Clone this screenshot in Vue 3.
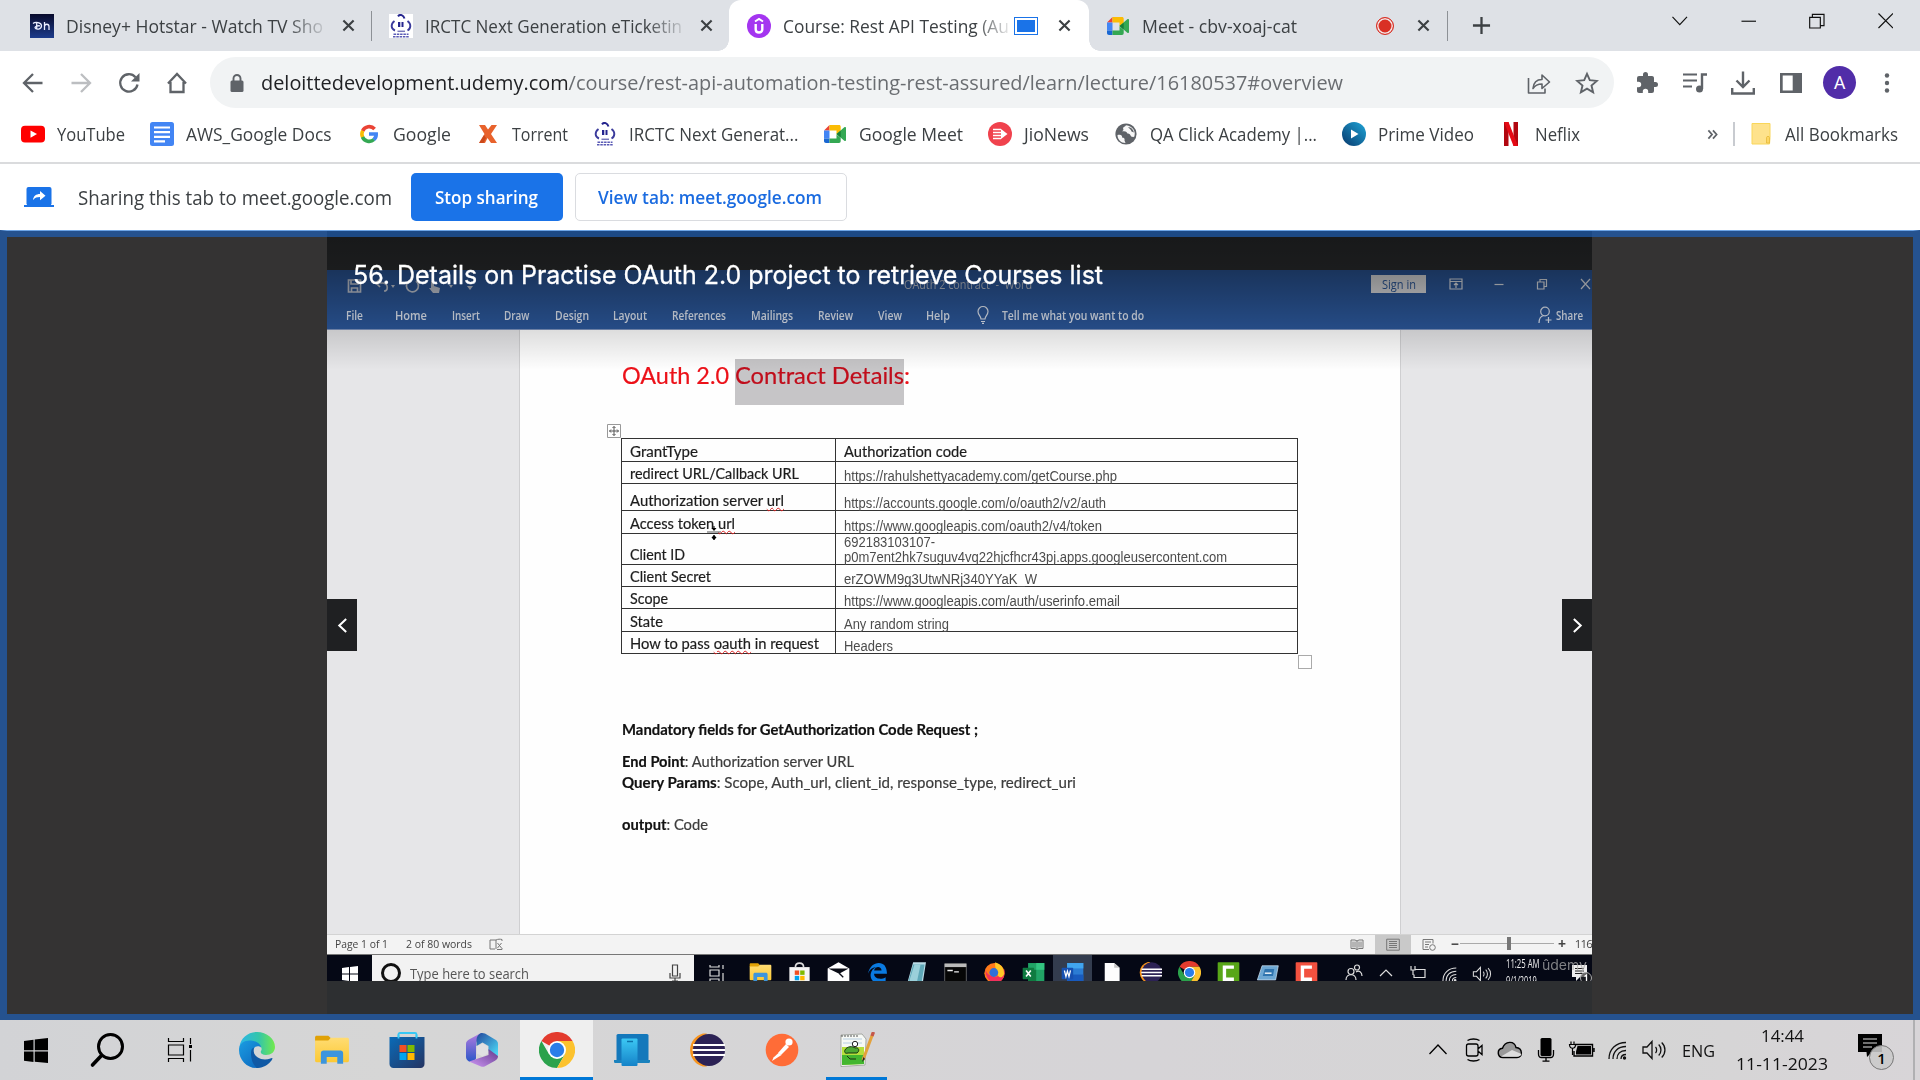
<script setup>
/* Fits a single-line label to a given advance width, whatever UI font is available. */
const vFit = {
  mounted(el, { value }) {
    const width = el.getBoundingClientRect().width
    if (!width || !value) return
    el.style.transform = `scaleX(${value / width})`
    el.style.marginRight = `${value - width}px`
  },
}

const bookmarks = [
  { icon: 'youtube', label: 'YouTube', w: 68 },
  { icon: 'docs', label: 'AWS_Google Docs', w: 145.5 },
  { icon: 'google', label: 'Google', w: 58 },
  { icon: 'torrent', label: 'Torrent', w: 56 },
  { icon: 'irctc', label: 'IRCTC Next Generat...', w: 169.5 },
  { icon: 'meet', label: 'Google Meet', w: 104 },
  { icon: 'jio', label: 'JioNews', w: 65 },
  { icon: 'globe', label: 'QA Click Academy |...', w: 167 },
  { icon: 'prime', label: 'Prime Video', w: 96 },
  { icon: 'netflix', label: 'Neflix', w: 45 },
]
const actions = ['puzzle', 'queue', 'download', 'panel']
const menu = [
  ['Home', 32], ['Insert', 28], ['Draw', 25.5], ['Design', 34], ['Layout', 34], ['References', 54],
  ['Mailings', 42], ['Review', 35], ['View', 24], ['Help', 24],
]
const rows = [
  { h: 22.5, left: ['GrantType'], lw: 68, right: ['Authorization code'], rw: [123], lato: true },
  { h: 22.5, left: ['redirect URL/Callback URL'], lw: 169, right: ['https://rahulshettyacademy.com/getCourse.php'], rw: [273] },
  { h: 27, left: ['Authorization server ', 'url'], lw: 154, right: ['https://accounts.google.com/o/oauth2/v2/auth'], rw: [262] },
  { h: 23, left: ['Access token ', 'url'], lw: 105, right: ['https://www.googleapis.com/oauth2/v4/token'], rw: [258] },
  { h: 31, left: ['Client ID'], lw: 55, right: ['692183103107-', 'p0m7ent2hk7suguv4vq22hjcfhcr43pj.apps.googleusercontent.com'], rw: [91, 383] },
  { h: 22, left: ['Client Secret'], lw: 81, right: ['erZOWM9g3UtwNRj340YYaK_W'], rw: [193] },
  { h: 22, left: ['Scope'], lw: 38, right: ['https://www.googleapis.com/auth/userinfo.email'], rw: [276] },
  { h: 23, left: ['State'], lw: 33, right: ['Any random string'], rw: [105] },
  { h: 22, left: ['How to pass ', 'oauth', ' in request'], lw: 189, right: ['Headers'], rw: [49] },
]
const wordApps = ['folder', 'bag', 'mail', 'olde', 'notes', 'cmd', 'firefox', 'excel', 'word', 'file', 'eclipse', 'chrome', 'camg', 'card', 'camr']
const apps = [
  { icon: 'start' }, { icon: 'search' }, { icon: 'taskview' }, { icon: 'edge' }, { icon: 'folder' },
  { icon: 'store' }, { icon: 'm365' }, { icon: 'chrome', state: 'active' }, { icon: 'phone' },
  { icon: 'eclipse' }, { icon: 'postman' }, { icon: 'npp', state: 'open' },
]
const tray = ['up', 'cam', 'cloud', 'mic', 'battery', 'wifi', 'volume']
</script>

<template>
  <svg class="sprite" aria-hidden="true">
    <defs>
      <linearGradient id="gEdgeA" x1="0" x2="1"><stop offset="0" stop-color="#2bb5e8" /><stop offset=".55" stop-color="#35c6a8" /><stop offset="1" stop-color="#72ea4c" /></linearGradient>
      <linearGradient id="gEdgeB" x1="0" y1="0" x2="1" y2="1"><stop offset="0" stop-color="#1b9de2" /><stop offset="1" stop-color="#0a5fb8" /></linearGradient>
      <linearGradient id="gFolder" x1="0" y1="0" x2="0" y2="1"><stop offset="0" stop-color="#ffdc73" /><stop offset="1" stop-color="#fcc934" /></linearGradient>
      <linearGradient id="gStore" x1="0" y1="0" x2="1" y2="1"><stop offset="0" stop-color="#0a6bb8" /><stop offset="1" stop-color="#253462" /></linearGradient>
      <linearGradient id="gPrime" x1="1" y1="0" x2="0" y2="1"><stop offset="0" stop-color="#1fa6d8" /><stop offset="1" stop-color="#07386c" /></linearGradient>
      <linearGradient id="gHot" x1="0" y1="0" x2="0" y2="1"><stop offset="0" stop-color="#080a2b" /><stop offset="1" stop-color="#1d3c8c" /></linearGradient>
      <linearGradient id="gM1" x1="0" y1="0" x2="0" y2="1"><stop offset="0" stop-color="#b57ce0" /><stop offset="1" stop-color="#2a57c8" /></linearGradient>
      <linearGradient id="gM2" x1="0" y1="0" x2="1" y2="1"><stop offset="0" stop-color="#23479c" /><stop offset="1" stop-color="#4fe0fb" /></linearGradient>
      <linearGradient id="gM3" x1="0" y1="1" x2="1" y2="0"><stop offset="0" stop-color="#cf97f5" /><stop offset="1" stop-color="#623a8c" /></linearGradient>
      <linearGradient id="gPhone" x1="0" y1="0" x2="0" y2="1"><stop offset="0" stop-color="#3cc8f4" /><stop offset="1" stop-color="#1583c8" /></linearGradient>
    </defs>

    <symbol id="hotstar" viewBox="0 0 24 24"><rect width="24" height="24" fill="url(#gHot)" /><path d="M3 9.500c2-1.800 8.500-1.500 8.500 2.300s-5.500 4.200-6.500 2c0-1.800 2.500-2.200 5-2M6.700 8v7M14.500 8v8m0-3.500c0-3 4.500-3 4.500 0V16" fill="none" stroke="#e9edff" stroke-width="1.300" /></symbol>
    <symbol id="irctc" viewBox="0 0 24 24"><rect width="24" height="24" fill="#fff" /><path d="M9 2.300c2-2.600 5.500-1.200 6.500 2.200" fill="none" stroke="#25258e" stroke-width="2" /><path d="M5.500 7C1.500 10 1.800 15 6 16.500M18.500 7c4 3 3.500 7.500 0 9.500" fill="none" stroke="#3b3b9c" stroke-width="1.900" /><path d="M8.500 17.300h7.500" stroke="#7777bb" stroke-width="1.500" /><path d="M9 8h2.300v5H9zM12.500 8h2v5h-2z" fill="#25258e" /><path d="M4.500 20.300h15M4 22.800h16" stroke="#5a5ab5" stroke-width="1.500" stroke-dasharray="2.500 .8" /></symbol>
    <symbol id="udemy" viewBox="0 0 24 24"><circle cx="12" cy="12" r="12" fill="#a435f0" /><path d="M8 7.500 12 5l4 2.500" fill="none" stroke="#fff" stroke-width="2" /><path d="M8.700 10v5.500c0 4 6.600 4 6.600 0V10" fill="none" stroke="#fff" stroke-width="2.400" /></symbol>
    <symbol id="meet" viewBox="0 0 24 24"><path d="M1 8.500 6.500 3v5.500z" fill="#ea4335" /><path d="M1 8.500h5.500v8H1z" fill="#4285f4" /><path d="M1 16.500h5.500V21H3c-1.200 0-2-.8-2-2z" fill="#1967d2" /><path d="M6.500 3H16c1 0 1.700.7 1.700 1.700V9l-4.200 3.500v-4h-7z" fill="#fbbc04" /><path d="M6.500 16.500h7v-4l4.200 3.400V19c0 1.200-.7 2-1.700 2H6.500z" fill="#34a853" /><path d="m13.500 12 7.800-6.700c.7-.5 1.700-.2 1.700.7v12c0 .9-1 1.200-1.700.7z" fill="#34a853" /><path d="M17.700 8.700v7L13.500 12z" fill="#188038" /></symbol>
    <symbol id="close" viewBox="0 0 14 14"><path d="m1.500 1.500 11 11m0-11-11 11" stroke="#3c4043" stroke-width="2.300" fill="none" /></symbol>

    <symbol id="youtube" viewBox="0 0 24 24"><rect y="3.700" width="24" height="16.800" rx="4" fill="#f00" /><path d="m9.500 8.500 6.500 3.600-6.500 3.600z" fill="#fff" /></symbol>
    <symbol id="docs" viewBox="0 0 24 24"><rect width="24" height="24" rx="2.500" fill="#4285f4" /><path d="M4 5.500h16M4 10.200h16M4 14.800h16M4 19.300h11" stroke="#fff" stroke-width="2.200" /></symbol>
    <symbol id="google" viewBox="0 0 24 24"><g fill="none" stroke-width="3.600"><path d="M17.600 7A7.200 7.200 0 0 0 5.600 9" stroke="#ea4335" /><path d="M5.700 8.700a7.300 7.300 0 0 0 0 6.600" stroke="#fbbc04" /><path d="M5.500 15a7.200 7.200 0 0 0 11.500 2.500" stroke="#34a853" /><path d="M12 12h7.200a7.200 7.200 0 0 1-2.400 5.700" stroke="#4285f4" /></g></symbol>
    <symbol id="torrent" viewBox="0 0 24 24"><path d="M3 3h6l3 4.500L15.500 3H21l-6 9 6 9h-6l-3.500-5L9 21H3l5.500-9z" fill="#e8622c" /><path d="m3 21 5-8 2 3-2.500 5z" fill="#b9380f" opacity=".6" /></symbol>
    <symbol id="jio" viewBox="0 0 24 24"><circle cx="12" cy="12" r="12" fill="#f0424d" /><path d="M5 7.500h8M5 10.500h8M5 13.500h8M5 16.500h8" stroke="#fff" stroke-width="1.500" /><path d="m13 7 6.500 5-6.500 5z" fill="#fff" /></symbol>
    <symbol id="globe" viewBox="0 0 24 24"><circle cx="12" cy="12" r="10.600" fill="#5f6368" /><path d="M3.500 13c4-1 5 1 4.500 2.500 2 0 3 1 2.500 3l1 2.500C7 21 3.500 17.500 3.500 13zM12 3.300c-1 1.700-2.500 1-3 3 1 1.500 0 2.700-1 3 3 0 4.500 0 5 1.500s3 .5 3.500 2.500 3 1.500 3.500 2c2.500-5-1-11.500-8-12z" fill="#fff" opacity=".95" /><path d="M14 5c1 1.500 3 2 3.500 4.500l2.500 1C19 7 17 5.200 14 5z" fill="#5f6368" /></symbol>
    <symbol id="prime" viewBox="0 0 24 24"><circle cx="12" cy="12" r="12" fill="url(#gPrime)" /><path d="m9 7.500 7.500 4.500L9 16.500z" fill="#fff" /></symbol>
    <symbol id="netflix" viewBox="0 0 24 24"><path d="M5 0h4.500v24H5zM14.500 0H19v24h-4.500z" fill="#b1060f" /><path d="M5 0h4.500L19 24h-4.500z" fill="#e50914" /></symbol>
    <symbol id="mark" viewBox="0 0 24 24"><path d="M3 1.500h18v14l-.5 6.500H3z" fill="#fee28c" stroke="#f9d65a" /><path d="M17.500 21v-5.500c0-1.500 3-1.500 3 0V21z" fill="#fdd663" stroke="#e6b93a" stroke-width=".8" /></symbol>

    <symbol id="back" viewBox="0 0 24 24"><path d="M21.500 12H3.500M12 3l-9 9 9 9" fill="none" stroke="currentColor" stroke-width="2.300" /></symbol>
    <symbol id="reload" viewBox="0 0 24 24"><path d="M20.500 13.500A8.700 8.700 0 1 1 18.500 6.200" fill="none" stroke="#5f6368" stroke-width="2.300" /><path d="M22.500 2v8.500H14z" fill="#5f6368" /></symbol>
    <symbol id="home" viewBox="0 0 24 24"><path d="M3 12.500 12 3l9 9.500M5.500 11v10h13V11" fill="none" stroke="#5f6368" stroke-width="2.300" /></symbol>
    <symbol id="lock" viewBox="0 0 24 24"><rect x="5.500" y="9.500" width="13" height="11.500" rx="1.500" fill="#5f6368" /><path d="M8.500 10V7.500a3.500 3.500 0 0 1 7 0V10" fill="none" stroke="#5f6368" stroke-width="1.900" /></symbol>
    <symbol id="share" viewBox="0 0 24 24"><path d="M1.500 7v15h16.500v-4.500M6 17.500c.5-6 4-9 9-9V4l7.500 7-7.500 6.500v-4.500c-4 0-7 1.500-9 4.500z" fill="none" stroke="#5f6368" stroke-width="1.600" stroke-linejoin="round" /></symbol>
    <symbol id="star" viewBox="0 0 24 24"><path d="m12 2.800 2.800 6.400 7 .7-5.300 4.600 1.600 6.800-6.100-3.600-6.100 3.600 1.600-6.800-5.300-4.600 7-.7z" fill="none" stroke="#5f6368" stroke-width="1.900" /></symbol>
    <symbol id="puzzle" viewBox="0 0 24 24"><path d="M20.500 11H19V7c0-1.100-.9-2-2-2h-4V3.500a2.500 2.500 0 0 0-5 0V5H4a2 2 0 0 0-2 2v3.800h1.500a2.700 2.700 0 0 1 0 5.400H2V20c0 1.100.9 2 2 2h3.800v-1.500a2.700 2.700 0 0 1 5.400 0V22H17a2 2 0 0 0 2-2v-4h1.500a2.500 2.500 0 0 0 0-5z" fill="#5f6368" /></symbol>
    <symbol id="queue" viewBox="0 0 24 24"><path d="M0 3.500h14M0 9.500h14M0 15.500h9" stroke="#5f6368" stroke-width="2.200" /><path d="M24 3.500h-5V18" fill="none" stroke="#5f6368" stroke-width="2.400" /><circle cx="16.500" cy="18" r="3.500" fill="#5f6368" /></symbol>
    <symbol id="download" viewBox="0 0 24 24"><path d="M12 .5v15M5.500 9.500l6.500 6.500 6.500-6.500M1.200 17v5.500h21.600V17" fill="none" stroke="#5f6368" stroke-width="2.400" /></symbol>
    <symbol id="panel" viewBox="0 0 24 24"><path d="M1 2h22v20H1zm2.700 2.600v14.800h10V4.600z" fill="#5f6368" fill-rule="evenodd" /></symbol>
    <symbol id="cast" viewBox="0 0 30 20"><rect x="2.500" width="25" height="18.500" rx="2" fill="#1a73e8" /><path d="M0 19h30" stroke="#1a73e8" stroke-width="2" /><path d="M9 13c.5-4 3-6 7-6V4l5.500 4.700L16 13.200v-3.100c-3 0-5 .6-7 2.900z" fill="#fff" /></symbol>

    <symbol id="folder" viewBox="0 0 34 34"><path d="M1 5c0-1 .7-1.500 1.500-1.500h11L16 6l-2 3H1z" fill="#e0a106" /><path d="M1 8h12.500L16 5.500h15.500c1 0 1.500.5 1.500 1.500v20c0 1-.5 1.500-1.500 1.500h-29C1.500 28.500 1 28 1 27z" fill="url(#gFolder)" /><path d="M6.500 30V20c0-1.500 1-2.500 2.500-2.500h16c1.500 0 2.500 1 2.500 2.500v10H22v-6.500H12V30z" fill="#3d95dc" /></symbol>
    <symbol id="chrome" viewBox="0 0 36 36"><path d="M18 18 2.400 9A18 18 0 0 1 33.600 9H18z" fill="#e33b2e" /><path d="M2.400 9A18 18 0 0 0 18 36l7.800-13.500L18 18l-7.800 4.500z" fill="#2ba24c" /><path d="M33.600 9A18 18 0 0 1 18 36l7.800-13.500L18 9z" fill="#fcc22e" /><circle cx="18" cy="18" r="9" fill="#fff" /><circle cx="18" cy="18" r="7.200" fill="#2a7de9" /></symbol>
    <symbol id="eclipse" viewBox="0 0 36 36"><path d="M14 1.500A17 17 0 0 0 14 34.500l4 0A20 20 0 0 1 18 1.500z" fill="#f7941e" /><circle cx="20" cy="18" r="16" fill="#2c2255" /><path d="M4 13h32M3.500 18h33M4 23h32" stroke="#fff" stroke-width="2.200" /></symbol>

    <symbol id="bag" viewBox="0 0 34 34"><path d="M2 9h30v25H2z" fill="#f5f5f5" /><path d="M11 9c0-8 12-8 12 0" fill="none" stroke="#ddd" stroke-width="2.500" /><path d="M10 14h6.500v6.500H10z" fill="#f25022" /><path d="M18 14h6.500v6.500H18z" fill="#7fba00" /><path d="M10 22h6.500v6.500H10z" fill="#00a4ef" /><path d="M18 22h6.500v6.500H18z" fill="#ffb900" /></symbol>
    <symbol id="mail" viewBox="0 0 34 34"><path d="M1 11 17 2l16 9v23H1z" fill="#fff" /><path d="M2 11h30l-14 8z" fill="#0a0c16" /><path d="m18 18 6 6" stroke="#0a0c16" stroke-width="2" /></symbol>
    <symbol id="olde" viewBox="0 0 34 34"><path d="M3 19C5 8 12 3 19 3s12 5 12 16H12c0 8 11 9 17 5v6c-12 7-24 0-22-11 1-5 4-8 8-10-6 1-10 4-12 10zm9-5h11c0-7-10-7-11 0z" fill="#0a7ae0" /></symbol>
    <symbol id="notes" viewBox="0 0 34 34"><path d="M12 2h19l-5 32H3z" fill="#b9dbe6" /><path d="M12 5h17l-5 29H4z" fill="#5fa8b8" /><path d="M14 5h9L17 34H5z" fill="#9bd0da" /></symbol>
    <symbol id="cmd" viewBox="0 0 34 34"><path d="M1 4h32v30H1z" fill="#060606" stroke="#8a8a8a" /><path d="M1 4h32v5H1z" fill="#bbb" /><path d="M5 14h8m2 2h7" stroke="#eee" stroke-width="2" /></symbol>
    <symbol id="firefox" viewBox="0 0 34 34"><circle cx="17" cy="18" r="15" fill="#ff7a1a" /><path d="M4 11C2 27 14 34 22 32S34 18 31 11c-1 4-6 14-15 12S4 17 4 11z" fill="#f2305c" /><path d="M18 2c9 3 14 10 13 18-3 6-9 5-9 0s-5-6-4-18z" fill="#ffc926" /><circle cx="16" cy="17" r="6.500" fill="#2f70d9" /></symbol>
    <symbol id="excel" viewBox="0 0 34 34"><path d="M9 3h24v31H9z" fill="#21a366" /><path d="M21 3h12v10H21z" fill="#33c481" /><path d="M9 13h12v21H9z" fill="#107c41" /><rect x="1" y="10" width="17" height="17" rx="1" fill="#0f7a40" /><path d="m6 14 7 9m0-9-7 9" stroke="#fff" stroke-width="2.400" /></symbol>
    <symbol id="word" viewBox="0 0 34 34"><path d="M9 3h24v31H9z" fill="#2b7cd3" /><path d="M9 3h24v8H9z" fill="#41a5ee" /><path d="M9 20h24v14H9z" fill="#185abd" /><rect x="1" y="10" width="17" height="17" rx="1" fill="#1650b0" /><path d="m5 14 2.300 9L9.500 15l2.300 8L14 14" fill="none" stroke="#fff" stroke-width="1.900" /></symbol>
    <symbol id="file" viewBox="0 0 34 34"><path d="M7 3h14l8 7v24H7z" fill="#fdfdfd" /><path d="M21 3v7h8z" fill="#c7c7c7" /></symbol>
    <symbol id="camg" viewBox="0 0 34 34"><rect x="1" y="2" width="32" height="32" rx="1" fill="#58a618" /><path d="M25 9H11v18h14" fill="none" stroke="#fff" stroke-width="5" /></symbol>
    <symbol id="camr" viewBox="0 0 34 34"><rect x="1" y="2" width="32" height="32" rx="1" fill="#f2513f" /><path d="M25 9H11v18h14" fill="none" stroke="#fff" stroke-width="5" /></symbol>
    <symbol id="card" viewBox="0 0 34 34"><path d="M9 7h24l-4 21H2z" fill="#6da7d3" stroke="#d6e8f5" /><path d="M13 12h14l-2 10H10z" fill="#2f74ae" /><path d="M13 18h10" stroke="#fff" stroke-width="2" /></symbol>

    <symbol id="start" viewBox="0 0 36 36"><path d="m10 9 9.500-1.300v10.500H10zM20.700 7.500 34 6v12.200H20.700zM10 19.500h9.500V30L10 28.700zM20.700 19.500H34V31l-13.300-1.300z" fill="#000" /></symbol>
    <symbol id="search" viewBox="0 0 36 36"><circle cx="21.500" cy="14.500" r="12" fill="none" stroke="#000" stroke-width="3" /><path d="M12.500 23.500 3.500 33" stroke="#000" stroke-width="3.600" stroke-linecap="round" /></symbol>
    <symbol id="taskview" viewBox="0 0 36 36"><path d="M4.500 6v3.500h15V6M4.500 13h15v10h-15zM4.500 30v-3.500h15V30M26.500 6v6M26.500 18v11.500" fill="none" stroke="#000" stroke-width="1.200" /><path d="M25 13h3v3h-3z" /></symbol>
    <symbol id="edge" viewBox="0 0 36 36"><path d="M.5 15C1.500 6 9 0 18 0c10 0 18 7 18 15 0 5-4 8-9 8-4 0-6-2-5-4 2-3-1-7-6-7-7 0-13 2-15.500 3z" fill="url(#gEdgeA)" /><path d="M0 18C0 11 6 8 12 8.500c6 .5 10 4 10 7-2-2-6-1.500-7 1-3 7 3 15 13 14-3 3-6 5.500-11 5.500C8 36 0 28 0 18z" fill="url(#gEdgeB)" /><path d="M12 21c0-3 1-5 3-5.500-2 6 3 12 11 12 4 0 6-1.500 7-1.500 1 0 0 2-1 3-3 4-8 7-14 7-4-3-6-9-6-15z" fill="#1059a5" /></symbol>
    <symbol id="store" viewBox="0 0 36 36"><path d="M9.500 8V2.500c0-1 .5-1.500 1.500-1.500h15c1 0 1.500.5 1.500 1.500V8" fill="none" stroke="#37c8f5" stroke-width="1.800" /><path d="M.5 5h35v27c0 2-1.500 4-4 4h-27c-2.500 0-4-2-4-4z" fill="url(#gStore)" /><path d="M9.500 2.500V6.500M27.500 2.500V6.500" stroke="#37c8f5" stroke-width="1.800" /><path d="M10.500 13H17.500v7h-7z" fill="#f25022" /><path d="M18.500 13H25.500v7h-7z" fill="#7fba00" /><path d="M10.500 21H17.500v7h-7z" fill="#00a4ef" /><path d="M18.500 21H25.500v7h-7z" fill="#ffb900" /></symbol>
    <symbol id="m365" viewBox="0 0 36 36"><path d="M17 1 5 7.500C3 8.600 2 10 2 12v13c0 2 1 3 3 4.500 3 1 6-1 7-3V11z" fill="url(#gM1)" /><path d="M17 1c-3 1.500-4.500 4-4.500 7v6l6-3.500 6 3.500v5L34 24V12c0-2-1-3.500-3-4.500L21 1.600C19.500.8 18 .8 17 1z" fill="url(#gM2)" /><path d="M24.500 17v6L5 29.500l12 5c1.300.6 3 .4 4-.2l10-5.500c2-1.200 3-2.500 3-4.800z" fill="url(#gM3)" /><path d="M18.500 11.500 24 14.500v7l-5.500 3-5.500-3v-7z" fill="#e0e0e2" /></symbol>
    <symbol id="phone" viewBox="0 0 36 36"><rect x="2.500" y="2" width="32" height="27" rx="1.500" fill="#1478bb" /><path d="M0 28h36v1.500c0 1-.7 1.500-1.500 1.500h-33C.7 31 0 30.500 0 29.500z" fill="#1b82bd" /><rect x="7.500" y="6.500" width="16" height="27.500" rx="1" fill="url(#gPhone)" /><path d="M13 9.500h6" stroke="#0d72ab" stroke-width="1.500" /></symbol>
    <symbol id="postman" viewBox="0 0 36 36"><circle cx="18" cy="18" r="16.300" fill="#ff6c37" /><circle cx="25" cy="10" r="3.600" fill="#fff" /><path d="m22 12 3 3-8 8-3-2z" fill="#fff" /><path d="m14.500 21 3 2L8 29l1.500-3.500z" fill="#fff" /></symbol>
    <symbol id="npp" viewBox="0 0 36 36"><path d="m2 3 21-1 4 5-1 26-24 1.500z" fill="#f7f9f5" stroke="#8b8f88" stroke-width=".7" /><path d="M4 7h19M4 11h19" stroke="#b8cfe2" /><path d="M3 3v2M6 3v2M9 3v2M12 3v2M15 3v2M18 3v2" stroke="#555" /><path d="M3 15h22v17L3 33z" fill="#b5df3b" /><path d="M3 23h22v9L3 33z" fill="#43b62f" /><path d="M6 18c2-4 8-4 10-2 4-1 5 3 2 5H9c-3 1-4-1-3-3zm2 6 3 3h6" fill="#4ea832" stroke="#183511" /><circle cx="16" cy="12" r="2.700" fill="#fff" stroke="#222" /><path d="m34 1-10 27" stroke="#e4a23b" stroke-width="3" /><path d="m34.500 0-1.500 4" stroke="#c4574c" stroke-width="3.200" /><path d="m24.500 25-1.500 5 3-3z" fill="#222" /></symbol>

    <symbol id="up" viewBox="0 0 28 28"><path d="m5.500 18 8.500-9 8.500 9" fill="none" stroke="#000" stroke-width="1.300" /></symbol>
    <symbol id="cam" viewBox="0 0 28 28"><path d="M8.500 8H16c1.200 0 2 .8 2 2v8c0 1.200-.8 2-2 2H8.500c-1.200 0-2-.8-2-2v-8c0-1.200.8-2 2-2zM18.500 12.500l3.500-3v9l-3.500-3M7.500 4.500c3-2 9-2 12 0M7.500 23.500c3 2 9 2 12 0" fill="none" stroke="#000" stroke-width="1.300" /></symbol>
    <symbol id="cloud" viewBox="0 0 28 28"><path d="M7 21.500C1 21.500.5 13 6.500 12.300 9 4.500 18.500 4.500 20 11.500c7 .5 7 10 1 10z" fill="#999" stroke="#000" stroke-width="1.400" /><path d="M5 20.500 16 14l9.500 4c-1 2-2 2.700-4.500 2.800H7z" fill="#ddd" /></symbol>
    <symbol id="mic" viewBox="0 0 28 28"><rect x="8.500" y="2" width="11" height="18" rx="1.500" /><path d="M6.500 14v4c0 2 1 3.500 3 3.500h9c2 0 3-1.500 3-3.500v-4M14 21.500v3.500M10.500 25.200h7" fill="none" stroke="#000" stroke-width="1.300" /></symbol>
    <symbol id="battery" viewBox="0 0 28 28"><path d="M7 8.500h17.500v11.500H6v-5M26 12v4" fill="none" stroke="#000" stroke-width="1.400" /><path d="M9.500 10h13.500v8.500H8v-3z" /><path d="M3 5.500V8M6 5.500V8M1.500 8.500h6c0 5-6 5-6 0zM4.500 12v7" stroke="#000" stroke-width="1.200" fill="#d5d5d6" /></symbol>
    <symbol id="wifi" viewBox="0 0 28 28"><path d="M5 23C5 13 12 6.500 22 6.500M9 23c0-7.500 5-12.500 13-12.500M13 23c0-5 3-8.500 9-8.500M17 23c0-2.500 1.500-4.500 5-4.500" fill="none" stroke="currentColor" stroke-width="1.300" /><circle cx="20.500" cy="22" r="1.700" fill="currentColor" /></symbol>
    <symbol id="volume" viewBox="0 0 28 28"><path d="M3 11h4l5-5.500v17L7 17H3zM15.500 11c1.500 1.500 1.500 4.500 0 6M18.700 8.500c3 3 3 8 0 11M21.700 6.500c4.300 4 4.300 11 0 15" fill="none" stroke="currentColor" stroke-width="1.300" /></symbol>
  </svg>

  <div class="screen">
    <header class="tabs">
      <div class="tab t1"><svg class="i24"><use href="#hotstar" /></svg><span class="ttl"><span v-fit="257" class="fit">Disney+ Hotstar - Watch TV Sho</span></span><svg class="x"><use href="#close" /></svg></div>
      <i class="sep"></i>
      <div class="tab t2"><svg class="i24"><use href="#irctc" /></svg><span class="ttl"><span v-fit="257" class="fit">IRCTC Next Generation eTicketin</span></span><svg class="x"><use href="#close" /></svg></div>
      <div class="tab on"><svg class="i24"><use href="#udemy" /></svg><span class="ttl short"><span v-fit="226" class="fit">Course: Rest API Testing (Au</span></span><i class="sharing"></i><svg class="x"><use href="#close" /></svg></div>
      <div class="tab t4"><svg class="i24"><use href="#meet" /></svg><span v-fit="155" class="fit grow">Meet - cbv-xoaj-cat</span><i class="rec"></i><svg class="x"><use href="#close" /></svg></div>
      <i class="sep"></i>
      <svg class="plus" viewBox="0 0 20 20"><path d="M10 1v18M1 10h18" stroke="#3c4043" stroke-width="2.400" /></svg>
      <div class="win">
        <svg viewBox="0 0 16 16"><path d="m.5 4 7.500 8 7.500-8" /></svg>
        <svg viewBox="0 0 16 16"><path d="M.5 8.500h15" /></svg>
        <svg viewBox="0 0 16 16"><path d="M.7 4.500h11v11H.7zM3.500 4V1.500h12v11.500H12" /></svg>
        <svg viewBox="0 0 16 16"><path d="m.5.5 15 15m0-15-15 15" /></svg>
      </div>
    </header>

    <div class="toolbar">
      <svg class="i24 nav"><use href="#back" /></svg>
      <svg class="i24 nav fwd"><use href="#back" /></svg>
      <svg class="i24 nav"><use href="#reload" /></svg>
      <svg class="i24 nav"><use href="#home" /></svg>
      <div class="omni">
        <svg class="i24"><use href="#lock" /></svg>
        <span v-fit="1082" class="fit url"><b>deloittedevelopment.udemy.com</b>/course/rest-api-automation-testing-rest-assured/learn/lecture/16180537#overview</span>
        <svg class="i24 sh"><use href="#share" /></svg>
        <svg class="i24 st"><use href="#star" /></svg>
      </div>
      <svg v-for="a in actions" :key="a" class="i24 act"><use :href="'#' + a" /></svg>
      <span class="avatar">A</span>
      <svg class="dots" viewBox="0 0 6 24"><circle cx="3" cy="4.500" r="2.200" /><circle cx="3" cy="12" r="2.200" /><circle cx="3" cy="19.500" r="2.200" /></svg>
    </div>

    <nav class="marks">
      <div v-for="b in bookmarks" :key="b.label" class="mark"><svg class="i24"><use :href="'#' + b.icon" /></svg><span v-fit="b.w" class="fit">{{ b.label }}</span></div>
      <svg class="more" viewBox="0 0 12 12"><path d="m1.500 1.500 4 4.500-4 4.500m5-9 4 4.500-4 4.500" fill="none" stroke="#5f6368" stroke-width="1.900" /></svg>
      <i class="bar"></i>
      <div class="mark all"><svg class="i24"><use href="#mark" /></svg><span v-fit="113" class="fit">All Bookmarks</span></div>
    </nav>

    <div class="infobar">
      <svg class="cast"><use href="#cast" /></svg>
      <span class="msg"><span v-fit="314" class="fit">Sharing this tab to meet.google.com</span></span>
      <button class="stop"><span v-fit="103" class="fit">Stop sharing</span></button>
      <button class="view"><span v-fit="224" class="fit">View tab: meet.google.com</span></button>
    </div>

    <main class="stage">
      <div class="player">
        <div class="video">
          <div class="ribbon">
            <div class="titlebar">
              <svg class="quick" viewBox="0 0 130 18"><g fill="none" stroke="#c3c9d4" stroke-width="1.700"><path d="M1.500 3h12v12h-12zM4 3v4h7V3M4.500 15v-4h6v4" /><path d="M30 6h6c6 1 5 8 1 8M33 2l-4 4 4 4M64 3a6 6 0 1 0 5 1" /></g><path d="M84 4h3v5l6 2-1 5h-6l-4-5h2zM44 8h4l-2 3zM102 8h4l-2 3zM120 9h6l-3 4z" fill="#c3c9d4" /></svg>
              <span class="docname"><span v-fit="128" class="fit">OAuth 2 contract&nbsp; -&nbsp; Word</span></span>
              <span class="signin"><span v-fit="34" class="fit">Sign in</span></span>
              <div class="wwin">
                <svg viewBox="0 0 14 12"><path d="M1 1h12v10H1zM1 3.500h12M7 10V5m-2 2 2-2 2 2" /></svg>
                <svg viewBox="0 0 14 12"><path d="M2.500 6.500h9" /></svg>
                <svg viewBox="0 0 14 12"><path d="M2.500 4h6.500v7H2.500zM5 4V1.500h6.500v7H9" /></svg>
                <svg viewBox="0 0 14 12"><path d="m3 1 9 10m0-10L3 11" /></svg>
              </div>
            </div>
            <div class="menu">
              <span v-fit="17" class="fit file">File</span>
              <span v-for="m in menu" :key="m[0]" v-fit="m[1]" class="fit">{{ m[0] }}</span>
              <svg class="bulb" viewBox="0 0 12 18"><path d="M4 13c0-3-3-4-3-7.500a5 5 0 0 1 10 0C11 9 8 10 8 13zm0 2.500h4M5 17.300h2" /></svg>
              <span v-fit="142" class="fit tell">Tell me what you want to do</span>
              <svg class="person" viewBox="0 0 14 18"><circle cx="7" cy="5.500" r="4.300" /><path d="M1 17c0-5 2-7 5-7.500M10.500 11v6M7.500 14h6" /></svg>
              <span v-fit="27" class="fit shr">Share</span>
            </div>
          </div>

          <div class="desk">
            <article class="page">
              <h1><span v-fit="113" class="fit">OAuth 2.0&nbsp;</span><mark><span v-fit="169" class="fit">Contract Details</span></mark>:</h1>
              <div class="grid">
                <svg class="handle" viewBox="0 0 14 14"><path d="M.5.500h13v13H.500z" fill="#fff" stroke="#999" /><path d="M7 2.500v9M2.500 7h9M5.500 4 7 2.500 8.500 4M5.500 10 7 11.500 8.500 10M4 5.500 2.500 7 4 8.500M10 5.500 11.500 7 10 8.500" fill="none" stroke="#555" /></svg>
                <div v-for="(r, i) in rows" :key="i" class="row" :style="{ height: r.h + 'px' }">
                  <div class="cell l"><span v-fit="r.lw" class="fit"><template v-for="(p, k) in r.left" :key="k"><u v-if="k === 1">{{ p }}</u><template v-else>{{ p }}</template></template></span></div>
                  <div class="cell r" :class="{ lato: r.lato }"><span v-for="(p, k) in r.right" :key="k" v-fit="r.rw[k]" class="fit">{{ p }}</span></div>
                </div>
                <i class="size"></i>
                <svg class="cursor" viewBox="0 0 14 14"><path d="M0 6h14" stroke="#555" /><path d="M7 0v4M7 9v5" stroke="#000" /><path d="M4.500 2h5L7 5zM4.500 11.500h5L7 14zM4.500 11.500 7 9l2.500 2.500z" /></svg>
              </div>
              <p class="p1"><b v-fit="356" class="fit">Mandatory fields for GetAuthorization Code Request ;</b></p>
              <p class="p2"><span v-fit="232" class="fit"><b>End Point</b>: Authorization server URL</span></p>
              <p class="p3"><span v-fit="454" class="fit"><b>Query Params</b>: Scope, Auth_url, client_id, response_type, redirect_uri</span></p>
              <p class="p4"><span v-fit="86" class="fit"><b>output</b>: Code</span></p>
            </article>
          </div>

          <div class="status">
            <span v-fit="53" class="fit">Page 1 of 1</span>
            <span v-fit="66" class="fit words">2 of 80 words</span>
            <svg class="book" viewBox="0 0 14 12"><path d="M7 2v9M7 2H1v9h5M7 2c2-1 4-1 6-.5V3M8.500 5l4 5m0-5-4 5M13 10v1.500H8" /></svg>
            <div class="views">
              <svg viewBox="0 0 14 12"><path d="M7 2v9.500M1 1.500h4l2 1 2-1h4V10H9l-2 1-2-1H1zM3 3v6M5 3v6M9 3v6M11 3v6" /></svg>
              <svg class="sel" viewBox="0 0 14 12"><path d="M.7.700h12.600v11H.700zM3 3h8M3 5h8M3 7h8M3 9h8" /></svg>
              <svg viewBox="0 0 14 12"><path d="M11 5V1H1v10h6M3 3.500h6M3 6h4M3 8.500h3" /><circle cx="10.500" cy="9" r="2.800" /></svg>
            </div>
            <b class="pm first">−</b><i class="slider"></i><b class="pm">+</b><span class="pct">116</span>
          </div>

          <div class="wbar">
            <svg class="wstart" viewBox="0 0 16 16"><path d="m0 2 7-1v6.500H0zM8 .9 16 0v7.500H8zM0 8.500h7V15l-7-1zM8 8.500h8V16l-8-1z" fill="#fff" /></svg>
            <div class="wsearch"><i class="ring"></i><span v-fit="119" class="fit">Type here to search</span><svg viewBox="0 0 12 18"><path d="M3.500 1h5v11h-5zM1 9v5h10V9M6 14v3M3 17h6" /></svg></div>
            <svg class="wtask" viewBox="0 0 18 18"><path d="M2 1v2h9V1M2 6h9v6H2zM2 17v-2h9v2M15 1v4M15 9v8" /></svg>
            <div class="wapps"><span v-for="a in wordApps" :key="a" :class="{ cur: a === 'word' }"><svg><use :href="'#' + a" /></svg></span></div>
            <div class="wtray">
              <svg viewBox="0 0 18 18"><circle cx="6" cy="7.500" r="3" /><circle cx="12" cy="3.500" r="2.500" /><path d="M1 16c0-7 10-7 10 0M11 8c3-2 6 0 6 4" /></svg>
              <svg viewBox="0 0 18 18"><path d="m3 12 6-6 6 6" /></svg>
              <svg viewBox="0 0 18 18"><path d="M6 5.500h10v8H5v-3M2 2v4h4V2M4 6v5" /></svg>
              <svg class="wf"><use href="#wifi" /></svg>
              <svg class="wf"><use href="#volume" /></svg>
            </div>
            <div class="wclock"><span v-fit="45" class="fit">11:25 AM</span><span v-fit="43" class="fit">9/1/2019</span></div>
            <svg class="wnote" viewBox="0 0 20 20"><path d="M0 2h15v12H8l-4 4v-4H0z" fill="#eee" /><path d="M3 5.500h9M3 8h9M3 10.500h9" stroke="#222" stroke-width="1.200" /><circle cx="14" cy="15" r="5.500" fill="#222a" stroke="#aaa" /><path d="M12.500 13.500 14.500 12v6.500" fill="none" stroke="#fff" stroke-width="1.300" /></svg>
            <span class="brand">ûdemy</span>
          </div>
        </div>
        <div class="shade"></div>
        <h2 class="lecture"><span v-fit="750" class="fit">56. Details on Practise OAuth 2.0 project to retrieve Courses list</span></h2>
        <button class="go prev"><svg viewBox="0 0 12 18"><path d="m10 2-7.500 7 7.500 7" /></svg></button>
        <button class="go next"><svg viewBox="0 0 12 18"><path d="m2 2 7.500 7L2 16" /></svg></button>
      </div>
    </main>

    <footer class="taskbar">
      <div v-for="a in apps" :key="a.icon" class="app" :class="a.state"><svg><use :href="'#' + a.icon" /></svg></div>
      <div class="tray"><svg v-for="t in tray" :key="t"><use :href="'#' + t" /></svg></div>
      <span class="lang"><span v-fit="33" class="fit">ENG</span></span>
      <div class="clock"><span v-fit="43" class="fit">14:44</span><span v-fit="92" class="fit">11-11-2023</span></div>
      <svg class="note" viewBox="0 0 38 38"><path d="M0 2h24v18H14l-5 5-.5-5H0z" fill="#000" /><path d="M5 7h14M5 11h14M5 15h9" stroke="#ddd" stroke-width="1.200" /><circle cx="23.500" cy="25.500" r="12" fill="#c9c9cae0" stroke="#777" /><text x="23.500" y="31.500">1</text></svg>
      <i class="peek"></i>
    </footer>
  </div>
</template>

<style>
body { margin: 0; overflow: hidden; }
</style>

<style scoped>
* { box-sizing: border-box; }
.sprite { position: absolute; width: 0; height: 0; }
.screen { width: 1920px; height: 1080px; display: flex; flex-direction: column; overflow: hidden; font-family: "Open Sans", "Noto Sans", sans-serif; font-size: 18px; color: #3c4043; background: #fff; }
svg { display: block; flex: none; }
i { display: block; flex: none; }
.fit { display: inline-block; flex: none; white-space: nowrap; transform-origin: 0 50%; }
.i24 { width: 24px; height: 24px; }
button { border: 0; padding: 0; font: inherit; display: flex; align-items: center; justify-content: center; }

.tabs { height: 51px; flex: none; display: flex; align-items: center; background: #dee1e6; }
.tab { display: flex; align-items: center; height: 51px; flex: none; }
.tab .ttl { width: 259px; margin-left: 12px; overflow: hidden; -webkit-mask-image: linear-gradient(90deg, #000 85%, transparent 102%); mask-image: linear-gradient(90deg, #000 85%, transparent 102%); }
.tab .ttl.short { width: 226px; }
.tab .x { width: 13px; height: 13px; margin-left: auto; }
.t1 { width: 370.500px; padding: 0 16px 0 30px; }
.t2 { width: 357px; padding: 0 16px 0 16.500px; }
.on { width: 360px; padding: 0 18px 0 18px; background: #fff; border-radius: 12px 12px 0 0; position: relative; }
.on::before, .on::after { content: ""; position: absolute; bottom: 0; width: 11px; height: 11px; }
.on::before { left: -11px; background: radial-gradient(circle at 0 0, transparent 10.500px, #fff 11px); }
.on::after { right: -11px; background: radial-gradient(circle at 100% 0, transparent 10.500px, #fff 11px); }
.sharing { width: 24px; height: 18px; margin-left: 5px; border: 1.500px solid #1a73e8; background: #1a73e8; box-shadow: inset 0 0 0 2px #fff; }
.t4 { width: 357.500px; padding: 0 17px 0 17px; }
.t4 .grow { margin-left: 12px; }
.rec { width: 18px; height: 18px; margin-left: 79px; border-radius: 50%; border: 1.500px solid #d93025; background: #d93025; box-shadow: inset 0 0 0 1.500px #f3e4e4; }
.sep { width: 1.500px; height: 30px; background: #8d9196; }
.plus { width: 19px; height: 19px; margin-left: 23.500px; }
.win { margin-left: auto; display: flex; gap: 53px; padding: 0 27px 9px 0; }
.win svg { width: 15.500px; height: 15.500px; }
.win path { fill: none; stroke: #111; stroke-width: 1.200; }

.toolbar { height: 63px; flex: none; display: flex; align-items: center; padding-left: 21px; color: #5f6368; }
.nav { margin-right: 24px; }
.fwd { transform: scaleX(-1); color: #bcbec1; }
.omni { width: 1404px; height: 51px; margin-left: -3px; padding-left: 15px; display: flex; align-items: center; background: #f1f3f4; border-radius: 26px; margin-right: 21px; }
.url { margin-left: 12px; font-size: 20px; color: #6a6d71; }
.url b { font-weight: 400; color: #202124; }
.sh { margin-left: 184px; }
.st { margin-left: 24px; }
.act { margin-right: 24px; }
.avatar { width: 33px; height: 33px; margin-left: -4px; border-radius: 50%; background: #512da8; color: #fff; font: 18px/33px Roboto, sans-serif; text-align: center; }
.dots { width: 6px; height: 24px; margin-left: 28px; fill: #5f6368; }

.marks { height: 50px; flex: none; display: flex; align-items: center; padding: 0 0 8px 21px; border-bottom: 2px solid #dadbdd; }
.mark { display: flex; gap: 12px; margin-right: 25px; align-items: center; }
.more { width: 11px; height: 11px; margin-left: 102px; }
.bar { width: 1.500px; height: 24px; margin-left: 15px; background: #c8cbd0; }
.all { margin: 0 0 0 14px; }

.infobar { height: 66px; flex: none; display: flex; align-items: center; padding-left: 24px; }
.cast { width: 30px; height: 20px; }
.msg { width: 333px; margin-left: 24px; font-size: 19.500px; white-space: nowrap; }
.stop, .view { height: 48px; border-radius: 5px; font-size: 18px; font-weight: 600; }
.stop { width: 152px; background: #1a73e8; color: #fff; padding-right: 2px; }
.view { width: 272px; margin-left: 12px; border: 1px solid #dadce0; background: #fff; color: #1a6be0; padding-right: 2px; }

.stage { height: 790px; flex: none; display: flex; padding: 6px 0 0 320px; border: 7px solid #25528f; border-top: 1px solid #6ea5e6; border-bottom-width: 6px; background: linear-gradient(90deg, #25528f 320px, #1c4985 320px 1585px, #25528f 1585px) 0 0 / 100% 6px no-repeat, #343333; }
.player { width: 1265px; flex: none; position: relative; padding-top: 33px; background: #2d2f31; }
.video { height: 711px; display: flex; flex-direction: column; overflow: hidden; filter: blur(.35px); }
.ribbon { height: 60px; flex: none; background: #2b579a; border-bottom: 1px solid #7d93bd; color: #dfe6f2; font-size: 12px; display: flex; flex-direction: column; }
.titlebar { height: 28px; display: flex; align-items: center; padding-left: 20px; }
.quick { width: 130px; height: 18px; margin-top: 3px; }
.docname { width: 468px; margin-left: 427px; color: #b7bfcc; white-space: nowrap; }
.signin { width: 55px; height: 18px; display: flex; align-items: center; justify-content: center; background: #dedfe1; color: #2b579a; font-weight: 500; }
.wwin { display: flex; gap: 29px; margin-left: 23px; }
.wwin svg { width: 14px; height: 12px; }
.wwin path { fill: none; stroke: #dfe3ea; stroke-width: 1.200; }
.menu { flex: 1; display: flex; align-items: center; gap: 24.800px; padding: 3px 0 0 18px; font-weight: 600; }
.menu .file { margin-left: 1px; }
.menu .file + .fit { margin-left: 7px; }
.bulb { width: 12px; height: 18px; margin-left: 1.500px; }
.menu path, .menu circle { fill: none; stroke: #dfe6f2; stroke-width: 1.200; }
.tell { margin-left: -12px; }
.person { width: 14px; height: 18px; margin-left: 370px; }
.shr { margin-left: -21px; }

.desk { height: 604px; flex: none; display: flex; background: #e6e6e8; padding-left: 191.500px; }
.page { width: 882.500px; padding: 29px 0 0 102.500px; background: #fefefe; border: solid #cfcfd1; border-width: 0 1px; font-family: Lato, "Noto Sans", sans-serif; font-size: 15.500px; color: #1c1c1c; -webkit-text-stroke: .2px; }
h1 { margin: 0; display: flex; height: 46px; font-size: 24px; font-weight: 400; line-height: 32px; color: #ec1119; }
mark { background: #c6c5c7; color: #c00d1b; display: flex; width: 169px; }
.grid { position: relative; width: 677px; margin: 33px 0 0 -1px; border: 1px solid #333; border-bottom: 0; }
.row { display: flex; border-bottom: 1px solid #333; }
.cell { display: flex; flex-direction: column; justify-content: flex-end; align-items: flex-start; padding-left: 8px; line-height: 15px; }
.cell.l { width: 214px; border-right: 1px solid #333; padding-bottom: 2px; }
.cell.r { font-family: "Liberation Sans", Arial, sans-serif; font-size: 14px; color: #4c4c4c; padding-top: .5px; margin-bottom: -.5px; -webkit-text-stroke: 0; }
.cell.r.lato { font-family: Lato, sans-serif; font-size: 15.500px; color: #1c1c1c; padding-bottom: 2.500px; -webkit-text-stroke: .2px; }
u { text-decoration: underline wavy #d22 1px; text-underline-offset: 1px; text-decoration-skip-ink: none; }
.handle { position: absolute; left: -15px; top: -15px; width: 14px; height: 14px; }
.size { position: absolute; right: -15px; bottom: -15px; width: 14px; height: 14px; border: 1px solid #aaa; background: #fff; }
.cursor { position: absolute; left: 85px; top: 87px; width: 14px; height: 14px; }
p { margin: 0; height: 20px; line-height: 20px; color: #3c3c3c; white-space: nowrap; }
p b { color: #111; font-weight: 700; }
.p1 { margin-top: 65px; }
.p2 { margin-top: 12px; }
.p3 { margin-top: 1px; }
.p4 { margin-top: 22px; }

.status { height: 20px; flex: none; display: flex; align-items: center; padding: 0 0 2px 8px; background: #f3f3f3; border-top: 1px solid #d3d3d3; font-size: 11.500px; font-weight: 500; color: #444; white-space: nowrap; }
.words { margin-left: 18px; }
.status path, .status circle { fill: none; stroke: #777; }
.book { width: 14px; height: 12px; margin-left: 17px; }
.views { display: flex; margin-left: 836px; align-items: center; height: 19px; padding-top: 2px; }
.views svg { width: 36px; height: 19px; padding: 3px 11px; }
.views .sel { background: #c9c9c9; }
.pm { width: 12px; text-align: center; font-size: 14px; }
.pm.first { margin-left: 3px; }
.slider { width: 94px; height: 1px; background: #aaa; position: relative; margin: 0 3px 0 1px; }
.slider::after { content: ""; position: absolute; left: 47px; top: -6px; width: 4px; height: 13px; background: #777; }
.pct { margin-left: 8px; letter-spacing: -.8px; }

.wbar { height: 27px; flex: none; display: flex; background: #050815; border-top: 1px solid #777; position: relative; }
.wstart { width: 16px; height: 16px; margin: 11px 14px 0 15px; }
.wsearch { width: 323px; height: 27px; display: flex; background: #f2f2f2; color: #555; font-size: 15px; }
.ring { width: 20px; height: 20px; margin: 8px 9px 0; border: 3px solid #111; border-radius: 50%; }
.wsearch .fit { line-height: 36px; height: 27px; }
.wsearch svg { width: 12px; height: 18px; margin: 9px 0 0 140px; }
.wsearch path { fill: none; stroke: #444; stroke-width: 1.200; }
.wtask { width: 18px; height: 18px; margin: 9px 0 0 14px; }
.wtask path, .wtray path, .wtray circle { fill: none; stroke: #ddd; stroke-width: 1.200; }
.wapps { display: flex; margin-left: 15px; }
.wapps span { width: 39px; padding: 6px 8px 0; height: 27px; overflow: hidden; }
.wapps .cur { background: #333c4e; }
.wapps svg { width: 23px; height: 23px; }
.wtray { display: flex; gap: 14px; margin: 9px 0 0 19px; color: #ddd; }
.wtray svg { width: 18px; height: 18px; }
.wtray .wf { width: 22px; height: 22px; margin: -1px -2px; }
.wclock { width: 70px; margin-left: 15px; display: flex; flex-direction: column; color: #eee; font-size: 12px; line-height: 16.500px; padding-top: 1px; }
.wnote { width: 20px; height: 20px; margin-top: 8px; margin-left: -4px; }
.brand { position: absolute; left: 1215px; top: 0; color: #aaa; font: 14px/20px Inter, sans-serif; opacity: .75; }

.shade { position: absolute; left: 0; right: 0; top: 0; height: 133px; background: linear-gradient(#00000078, #00000068 33px, #00000022 92px, #0000); }
.lecture { position: absolute; left: 26px; top: 22px; margin: 0; font: 400 25.500px/32px Inter, sans-serif; color: #fff; -webkit-text-stroke: .3px #fff; white-space: nowrap; }
.go { position: absolute; top: 362px; width: 30px; height: 52px; background: #1f2022; }
.go svg { width: 11px; height: 17px; }
.go path { fill: none; stroke: #fff; stroke-width: 2.200; }
.prev { left: 0; }
.next { right: 0; }

.taskbar { height: 60px; flex: none; display: flex; align-items: center; background: linear-gradient(90deg, #d2d3d6, #d6d6d6 20%, #d6d4d7 60%, #d5d5d5 85%, #d8d5d8); color: #111; }
.app { width: 75px; height: 60px; display: flex; align-items: center; justify-content: center; }
.app:first-child { width: 69px; padding-right: 5px; }
.app svg { width: 36px; height: 36px; }
.app.active { background: #efefef; border-bottom: 3px solid #0078d7; padding-top: 3px; width: 73px; margin: 0 1px; }
.app.open { background: linear-gradient(#0078d7, #0078d7) 50% 100% / 61px 3px no-repeat; }
.tray { display: flex; gap: 8px; margin-left: 530px; }
.tray svg { width: 28px; height: 28px; }
.lang { width: 54px; margin-left: 14px; font-size: 17px; }
.clock { width: 92px; display: flex; flex-direction: column; align-items: center; font-size: 17px; line-height: 28px; white-space: nowrap; padding-bottom: 1px; }
.note { width: 38px; height: 38px; margin-left: 30px; margin-top: 2px; }
.note text { font: 600 15px "Open Sans", sans-serif; text-anchor: middle; }
.peek { width: 2px; height: 60px; background: #b0b0b2; margin-left: auto; margin-right: 5px; }
</style>
